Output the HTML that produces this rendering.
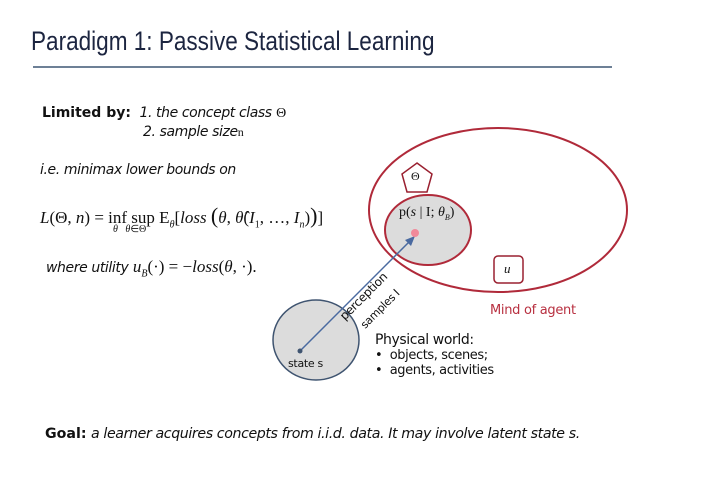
<!DOCTYPE html>
<html><head><meta charset="utf-8"><style>
body{margin:0;width:712px;height:497px;background:#fff;position:relative;overflow:hidden;font-family:"DejaVu Sans","Liberation Sans",sans-serif;color:#111}
.a{position:absolute;white-space:nowrap}
.s{font-family:"Liberation Serif",serif}
i{font-style:italic}
</style></head><body>
<div class="a" style="left:31px;top:26px;font-family:'Liberation Sans',sans-serif;font-size:27px;color:#1c2540;transform:scaleX(0.835);transform-origin:left top">Paradigm 1: Passive Statistical Learning</div>
<div class="a" style="left:33px;top:66px;width:579px;height:2px;background:#6d8096"></div>

<div class="a" style="left:42px;top:105px;font-size:14px"><b>Limited by:</b> <i style="letter-spacing:-0.4px">&nbsp;1. the concept class</i> <span class="s">Θ</span></div>
<div class="a" style="left:143px;top:124px;font-size:14px"><i style="letter-spacing:-0.4px">2. sample size</i><span class="s" style="font-size:12px">n</span></div>
<div class="a" style="left:40px;top:162px;font-size:14px"><i style="letter-spacing:-0.4px">i.e. minimax lower bounds on</i></div>
<div class="a s" style="left:40px;top:203px;font-size:17px"><i>L</i>(Θ, <i>n</i>) = inf sup E<sub style="font-size:10px"><i>θ</i></sub>[<i>loss</i> <span style="font-size:22px">(</span><i>θ</i>, <i>θ̂</i>(<i>I</i><sub style="font-size:10px">1</sub>, …, <i>I<sub style="font-size:10px">n</sub></i>)<span style="font-size:22px">)</span>]</div>
<div class="a s" style="left:113px;top:224px;font-size:10px"><i>θ</i> &nbsp;&nbsp;<i>θ</i>∈Θ</div>
<div class="a" style="left:46px;top:257px;font-size:14px"><i style="letter-spacing:-0.4px">where utility</i> <span class="s" style="font-size:17px"><i>u<sub style="font-size:10px">B</sub></i>(·) = −<i>loss</i>(<i>θ</i>, ·).</span></div>

<svg class="a" style="left:0;top:0" width="712" height="497">
<ellipse cx="498" cy="210" rx="129" ry="82" fill="none" stroke="#b02a3a" stroke-width="2"/>
<ellipse cx="428" cy="230" rx="43" ry="35" fill="#dcdcdc" stroke="#b02a3a" stroke-width="2"/>
<polygon points="417,163 432,174 427,192 407,192 402,174" fill="#fff" stroke="#9a2030" stroke-width="1.5"/>
<rect x="494" y="256" width="29" height="27" rx="4" fill="#fff" stroke="#9a2030" stroke-width="1.5"/>
<ellipse cx="316" cy="340" rx="43" ry="40" fill="#dcdcdc" stroke="#3f5470" stroke-width="1.5"/>
<line x1="300" y1="351" x2="411" y2="240" stroke="#4a6aa0" stroke-width="1.5"/>
<polygon points="415,236 405,240 411,246" fill="#4a6aa0"/>
<circle cx="300" cy="351" r="2.5" fill="#3f5470"/>
<circle cx="415" cy="233" r="4" fill="#f08a9a"/>
</svg>
<div class="a s" style="left:411px;top:169px;font-size:12px">Θ</div>
<div class="a s" style="left:399px;top:205px;font-size:14px">p(<i>s</i> | I; <i>θ<sub style="font-size:8px">B</sub></i>)</div>
<div class="a s" style="left:504px;top:261px;font-size:13px"><i>u</i></div>
<div class="a" style="left:337px;top:313px;font-size:12px;transform:rotate(-45deg);transform-origin:left top;letter-spacing:-0.3px">perception</div>
<div class="a" style="left:358px;top:322px;font-size:11px;transform:rotate(-45deg);transform-origin:left top;letter-spacing:-0.3px">samples I</div>
<div class="a" style="left:490px;top:303px;font-size:13px;color:#b83040;letter-spacing:-0.3px">Mind of agent</div>
<div class="a" style="left:288px;top:357px;font-size:11px;letter-spacing:-0.3px">state s</div>
<div class="a" style="left:375px;top:333px;font-size:14px;line-height:15px;letter-spacing:-0.4px">Physical world:<br><span style="font-size:13px">•&nbsp; objects, scenes;<br>•&nbsp; agents, activities</span></div>

<div class="a" style="left:45px;top:426px;font-size:14.2px"><b>Goal:</b> <i style="letter-spacing:-0.4px">a learner acquires concepts from i.i.d. data. It may involve latent state s.</i></div>
</body></html>
